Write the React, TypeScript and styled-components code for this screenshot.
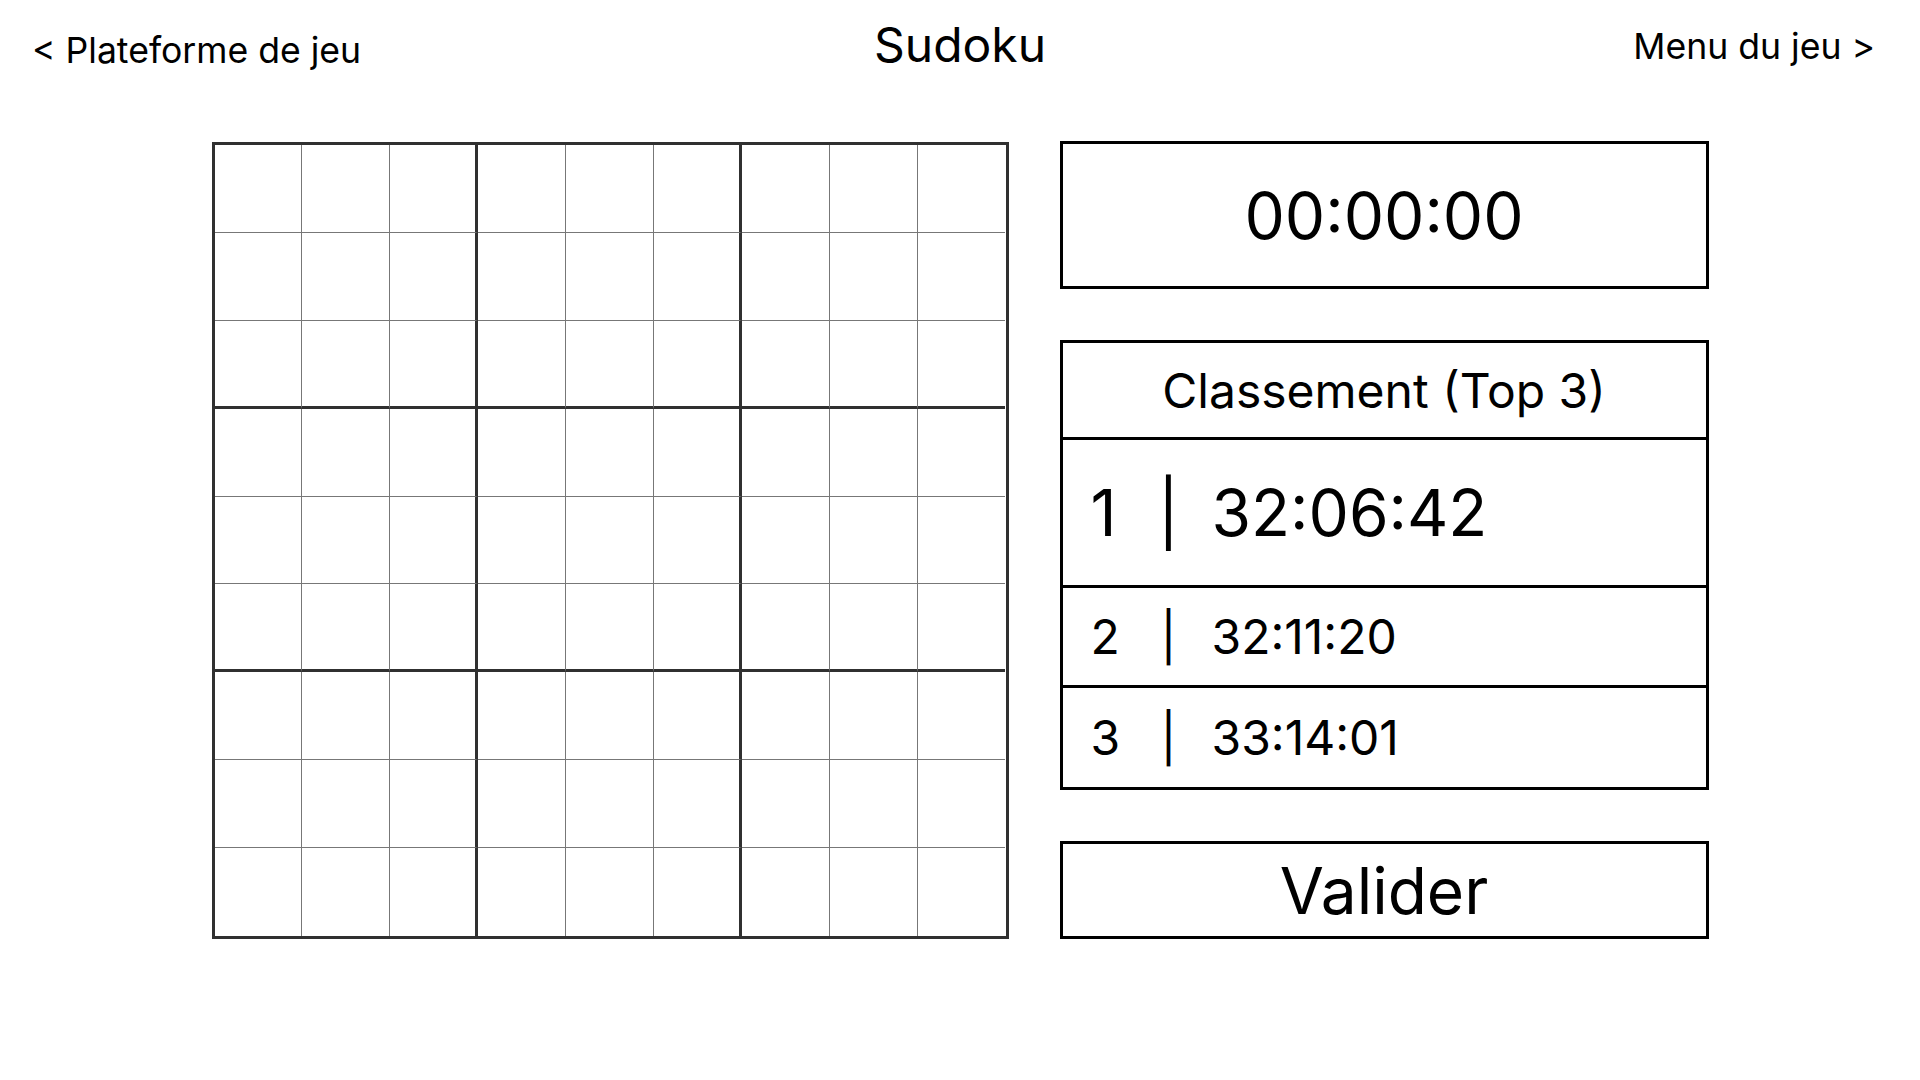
import React from "react";
import styled, { createGlobalStyle } from "styled-components";

const GlobalStyle = createGlobalStyle`
  html, body {
    margin: 0;
    padding: 0;
    background: #ffffff;
  }
  body {
    font-family: Inter, "Noto Sans", "Liberation Sans", sans-serif;
    color: #000000;
  }
`;

const Page = styled.div`
  width: 1920px;
  height: 1080px;
  display: flex;
  flex-direction: column;
`;

const Header = styled.header`
  height: 141px;
  display: grid;
  grid-template-columns: 1fr auto 1fr;
  align-items: start;
  padding: 0 32px;
  box-sizing: border-box;
`;

const NavLink = styled.a<{ $side: "left" | "right"; $top: number }>`
  justify-self: ${({ $side }) => ($side === "left" ? "start" : "end")};
  margin-right: ${({ $side }) => ($side === "right" ? 13 : 0)}px;
  padding-top: ${({ $top }) => $top}px;
  font-size: 35.6px;
  line-height: 1.21;
  color: #000;
  text-decoration: none;
  cursor: pointer;
`;

const Title = styled.h1`
  margin: 0;
  padding-top: 16px;
  font-size: 48px;
  font-weight: 400;
  line-height: 1.21;
`;

const Main = styled.main`
  display: flex;
  justify-content: center;
  align-items: flex-start;
  gap: 51px;
`;

const Board = styled.div`
  width: 797px;
  height: 797px;
  margin-top: 1px;
  box-sizing: border-box;
  border: 3px solid #303030;
  display: grid;
  grid-template-columns: repeat(9, 1fr);
  grid-template-rows: repeat(9, 1fr);
`;

const lineFor = (i: number) =>
  i === 8 ? "none" : i === 2 || i === 5 ? "3px solid #303030" : "1px solid #777777";

const Cell = styled.div<{ $row: number; $col: number }>`
  box-sizing: border-box;
  border-right: ${({ $col }) => lineFor($col)};
  border-bottom: ${({ $row }) => lineFor($row)};
  background: #ffffff;
`;

const Side = styled.aside`
  width: 649px;
  display: flex;
  flex-direction: column;
  gap: 51px;
`;

const TimerBox = styled.div`
  height: 148px;
  box-sizing: border-box;
  border: 3px solid #000;
  display: flex;
  align-items: center;
  justify-content: center;
  font-size: 64px;
`;

const Ranking = styled.section`
  border: 3px solid #000;
  display: flex;
  flex-direction: column;
`;

const RankingTitle = styled.div`
  height: 97px;
  box-sizing: border-box;
  border-bottom: 3px solid #000;
  display: flex;
  align-items: center;
  justify-content: center;
  font-size: 48px;
`;

const RankRow = styled.div<{ $height: number; $size: number; $last?: boolean }>`
  height: ${({ $height }) => $height}px;
  box-sizing: border-box;
  border-bottom: ${({ $last }) => ($last ? "none" : "3px solid #000")};
  display: flex;
  align-items: center;
  padding-left: 28px;
  font-size: ${({ $size }) => $size}px;
`;

const Rank = styled.span`
  width: 56px;
`;

const Bar = styled.span`
  width: 44px;
  text-align: center;
`;

const Time = styled.span`
  margin-left: 21px;
`;

const ValidateButton = styled.button`
  height: 98px;
  box-sizing: border-box;
  border: 3px solid #000;
  background: #fff;
  font-family: inherit;
  font-size: 64px;
  color: #000;
  padding: 0;
  cursor: pointer;
`;

const scores = [
  { rank: 1, time: "32:06:42", height: 148, size: 64 },
  { rank: 2, time: "32:11:20", height: 100, size: 48 },
  { rank: 3, time: "33:14:01", height: 99, size: 48 },
];

export default function App() {
  const cells = [];
  for (let r = 0; r < 9; r++) {
    for (let c = 0; c < 9; c++) {
      cells.push(<Cell key={`${r}-${c}`} $row={r} $col={c} />);
    }
  }

  return (
    <>
      <GlobalStyle />
      <Page>
        <Header>
          <NavLink $side="left" $top={29}>
            &lt; Plateforme de jeu
          </NavLink>
          <Title>Sudoku</Title>
          <NavLink $side="right" $top={25}>
            Menu du jeu &gt;
          </NavLink>
        </Header>
        <Main>
          <Board>{cells}</Board>
          <Side>
            <TimerBox>00:00:00</TimerBox>
            <Ranking>
              <RankingTitle>Classement (Top 3)</RankingTitle>
              {scores.map((s, i) => (
                <RankRow
                  key={s.rank}
                  $height={s.height}
                  $size={s.size}
                  $last={i === scores.length - 1}
                >
                  <Rank>{s.rank}</Rank>
                  <Bar>|</Bar>
                  <Time>{s.time}</Time>
                </RankRow>
              ))}
            </Ranking>
            <ValidateButton>Valider</ValidateButton>
          </Side>
        </Main>
      </Page>
    </>
  );
}
